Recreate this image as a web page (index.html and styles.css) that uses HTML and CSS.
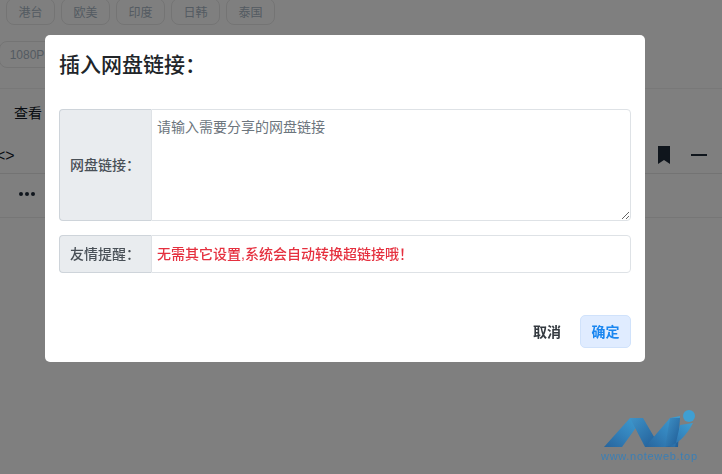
FILE: index.html
```html
<!DOCTYPE html>
<html lang="zh-CN">
<head>
<meta charset="utf-8">
<title>插入网盘链接</title>
<link rel="stylesheet" href="styles.css">
</head>
<body>
<div class="page">
  <div class="chips chips-first">
    <span class="chip">港台</span><span class="chip">欧美</span><span class="chip">印度</span><span class="chip">日韩</span><span class="chip">泰国</span>
  </div>
  <div class="chips chips-second">
    <span class="chip chip-res">1080P</span>
  </div>
  <div class="view-row">查看</div>
  <div class="toolbar">
    <span class="code">&lt;&gt;</span>
    <span class="tools">
      <svg class="bookmark" width="12" height="18" viewBox="0 0 12 18"><path d="M0 0H12V18L6 14L0 18Z"/></svg>
      <svg class="dash" width="16" height="2" viewBox="0 0 16 2"><rect width="16" height="2"/></svg>
    </span>
  </div>
  <div class="more-row"><svg width="16" height="4" viewBox="0 0 16 4"><circle cx="2" cy="2" r="2"/><circle cx="8" cy="2" r="2"/><circle cx="14" cy="2" r="2"/></svg></div>
</div>
<div class="overlay"></div>
<div class="dialog-layer">
  <div class="modal">
    <h5 class="modal-title">插入网盘链接：</h5>
    <div class="modal-body">
      <div class="group group-area">
        <span class="addon">网盘链接：</span>
        <textarea class="control area" placeholder="请输入需要分享的网盘链接"></textarea>
      </div>
      <div class="group group-note">
        <span class="addon">友情提醒：</span>
        <span class="control note">无需其它设置,系统会自动转换超链接哦！</span>
      </div>
    </div>
    <div class="modal-footer">
      <button class="btn btn-cancel">取消</button>
      <button class="btn btn-ok">确定</button>
    </div>
  </div>
  <div class="watermark">
    <svg width="98" height="46" viewBox="0 0 98 46">
      <defs>
        <linearGradient id="wm" x1="0" y1="1" x2="1" y2="0">
          <stop offset="0" stop-color="#27649c"/>
          <stop offset="0.5" stop-color="#3484bd"/>
          <stop offset="1" stop-color="#3f9fd2"/>
        </linearGradient>
        <linearGradient id="wd" x1="0" y1="0" x2="1" y2="1">
          <stop offset="0" stop-color="#3f93c8"/>
          <stop offset="1" stop-color="#1f5a94"/>
        </linearGradient>
      </defs>
      <circle cx="87" cy="8" r="6" fill="#3f9fd2"/>
      <path d="M2 39L28 10H41L20 39Z" fill="url(#wm)"/>
      <path d="M28 10H41L58 39H43Z" fill="url(#wd)"/>
      <path d="M43 39L68 10L78 8L73 39Z" fill="url(#wm)"/>
      <path d="M68 10H78L76 39H63Z" fill="url(#wd)"/>
      <path d="M63 39C76 37 84 28 91 15L78 17L73 39Z" fill="url(#wm)"/>
    </svg>
    <span class="wm-text">www.noteweb.top</span>
  </div>
</div>
</body>
</html>
```
FILE: styles.css
```css
* { box-sizing: border-box; }
html, body { margin: 0; height: 100%; overflow: hidden; }
body {
  background: #fff;
  font-family: "Liberation Sans", "Noto Sans CJK SC", sans-serif;
  font-size: 14px;
  color: #212529;
}
.page { height: 474px; }
.chips { display: flex; gap: 6px; }
.chips-first { margin: -2px 0 0 6px; }
.chips-second { margin-top: 16px; height: 48px; border-bottom: 1px solid #f0f0f0; }
.chip {
  display: flex;
  align-items: center;
  justify-content: center;
  width: 49px;
  height: 27px;
  border: 1px solid #e8e8e8;
  border-radius: 8px;
  font-size: 12px;
  color: #a8b6c4;
}
.chip-res { width: 56px; margin-left: -1px; }
.view-row { height: 48px; padding: 15px 0 0 14px; font-size: 14px; color: #111827; line-height: 18px; }
.toolbar {
  display: flex;
  justify-content: space-between;
  height: 37px;
  border-bottom: 1px solid #e6e6e6;
}
.code { margin-left: -4px; font-size: 16px; line-height: 38px; color: #111827; }
.tools { display: flex; gap: 21px; padding: 9px 15px 0 0; }
.bookmark { fill: #1f2a38; }
.dash { fill: #1f2a38; margin-top: 8px; }
.more-row { height: 44px; padding-top: 18px; padding-left: 19px; border-bottom: 1px solid #ececec; }
.more-row svg { display: block; fill: #1f2a38; }
.overlay { position: fixed; inset: 0; background: rgba(0, 0, 0, 0.5); }
.dialog-layer { position: fixed; inset: 0; }
.modal {
  margin: 35px 0 0 45px;
  width: 600px;
  height: 327px;
  background: #fff;
  border-radius: 5px;
  display: flex;
  flex-direction: column;
}
.modal-title {
  margin: 0;
  height: 74px;
  padding: 17px 14px 0;
  font-size: 21px;
  line-height: 26px;
  font-weight: 500;
  color: #212529;
}
.modal-body { padding: 0 14px; }
.group { display: flex; color: #495057; }
.group-area { height: 112px; margin-bottom: 14px; }
.group-note { height: 38px; }
.addon {
  flex: none;
  width: 92px;
  display: flex;
  align-items: center;
  justify-content: center;
  background: #e9ecef;
  border: 1px solid #ced4da;
  border-right: 0;
  border-radius: 4px 0 0 4px;
  font-size: 14px;
  font-weight: 500;
  padding: 0 1px 2px 0;
}
.control {
  flex: 1;
  border: 1px solid #dee2e6;
  border-radius: 0 4px 4px 0;
  font-size: 14px;
  padding: 8px 5px;
  font-family: inherit;
}
.area { display: block; resize: vertical; outline: none; line-height: 21px; padding-top: 7px; }
.area::placeholder { color: #6c757d; opacity: 1; }
.note { display: flex; align-items: center; color: #e5303f; font-weight: 500; padding: 0 5px 3px; }
.modal-footer {
  margin-top: auto;
  display: flex;
  justify-content: flex-end;
  gap: 10px;
  padding: 0 14px 14px;
}
.btn {
  height: 33px;
  width: 46px;
  border: 1px solid transparent;
  border-radius: 5px;
  background: none;
  font-family: "Liberation Sans", "Noto Sans CJK SC", sans-serif;
  font-size: 14px;
  font-weight: 700;
  padding: 0 0 2px;
  color: #343a40;
}
.btn-ok { width: 51px; background: #e0ecff; border-color: #d0e2fb; color: #1a86f0; }
.watermark {
  position: absolute;
  left: 602px;
  top: 408px;
  display: flex;
  flex-direction: column;
  align-items: flex-start;
}
.watermark svg { display: block; }
.wm-text { font-size: 11px; line-height: 12px; margin: -4px 0 0 -1px; letter-spacing: 0.7px; color: #3b7fb5; }
```
